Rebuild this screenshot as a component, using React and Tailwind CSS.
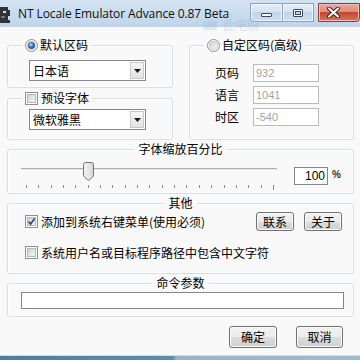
import React from 'react';

const btn =
  'flex items-center justify-center rounded-[3px] border border-[#707070] bg-[linear-gradient(#f2f2f2_0%,#ebebeb_50%,#dddddd_50%,#cfcfcf_100%)] shadow-[inset_0_0_0_1px_#fcfcfc] text-[12px] leading-none text-black';

const group = 'border border-[#d5dfe5] rounded-[3px] shadow-[inset_0_0_0_1px_#ffffff] m-0 p-0 min-w-0';

const Check = ({ checked }) => (
  <span className="flex w-[13px] h-[13px] shrink-0 border border-[#8e8f8f] bg-white p-[1px]">
    <span className="relative flex flex-1 border border-[#b3b8bd] bg-[linear-gradient(135deg,#cfd2d6,#f7f7f7)]">
      {checked && (
        <svg width="9" height="9" viewBox="0 0 9 9" className="absolute left-[-1px] top-[-1px]">
          <path d="M1.5 4.5 L3.6 7 L7.6 1.5" fill="none" stroke="#2c4c8c" strokeWidth="1.7" />
        </svg>
      )}
    </span>
  </span>
);

const Radio = ({ checked }) => (
  <svg width="13" height="13" viewBox="0 0 13 13" className="shrink-0">
    <defs>
      <linearGradient id="rg" x1="0" y1="0" x2="1" y2="1">
        <stop offset="0" stopColor="#c9ccd1" />
        <stop offset="1" stopColor="#f9f9f9" />
      </linearGradient>
      <radialGradient id="rd" cx="0.4" cy="0.35" r="0.7">
        <stop offset="0" stopColor="#b9e6ff" />
        <stop offset="0.5" stopColor="#3a8ae0" />
        <stop offset="1" stopColor="#123f8a" />
      </radialGradient>
    </defs>
    <circle cx="6.5" cy="6.5" r="6" fill="#ffffff" stroke="#8e8f8f" />
    <circle cx="6.5" cy="6.5" r="4.3" fill="url(#rg)" stroke="#b3b8bd" strokeWidth="0.6" />
    {checked && <circle cx="6.5" cy="6.5" r="3.2" fill="url(#rd)" stroke="#1d3f7a" strokeWidth="0.5" />}
  </svg>
);

const Select = ({ value }) => (
  <div className="flex items-center w-[117px] h-[21px] border border-[#828790] bg-white">
    <span className="flex-1 pl-[3px] text-[12px] leading-none">{value}</span>
    <span className="flex items-center justify-center w-[14px] h-[17px] mr-[1px] border border-[#c9c9c9] bg-[linear-gradient(#f7f7f7,#e3e3e3)]">
      <svg width="7" height="4" viewBox="0 0 7 4">
        <path d="M0 0 H7 L3.5 4 Z" fill="#1a1a1a" />
      </svg>
    </span>
  </div>
);

const Field = ({ label, value }) => (
  <div className="flex items-center h-[22px]">
    <span className="ml-[25px] w-[38px] text-[12px] leading-none">{label}</span>
    <span className="flex items-center w-[66px] h-[18px] border border-[#b9b9b9] bg-white pl-[2px] font-['Liberation_Sans',sans-serif] text-[11px] leading-none text-[#a3a3a3]">
      {value}
    </span>
  </div>
);

const ticks = Array.from({ length: 21 }, (_, i) => i);

export default function App() {
  return (
    <div className="relative w-[360px] h-[360px] overflow-hidden flex flex-col font-['Noto_Sans_CJK_SC','Noto_Sans',sans-serif] text-black">
      {/* Title bar */}
      <div className="flex items-start h-[27px] shrink-0 bg-[linear-gradient(180deg,#d3e3f3,#c0d4e9)]">
        <svg width="11" height="16" viewBox="0 0 11 16" className="mt-[7px]">
          <path d="M0 0 H8 V3 H10 V9 H8 V13 H10 V16 H0 Z" fill="#2e3338" />
          <rect x="3" y="4" width="3" height="2" fill="#d8dde2" />
          <rect x="1" y="9" width="4" height="2" fill="#6f7880" />
        </svg>
        <span className="ml-[7px] mt-[6px] font-['Open_Sans',sans-serif] text-[12px] leading-[16px] text-[#111] tracking-[-0.1px]">
          NT Locale Emulator Advance 0.87 Beta
        </span>
        <div className="ml-auto flex mt-[3px]">
          <div className="flex items-center justify-center w-[33px] h-[19px] border border-[#8ea4bd] rounded-bl-[4px] bg-[linear-gradient(#e6eef7_0%,#d5e2f0_50%,#c3d5e8_50%,#cfdfef_100%)] shadow-[inset_0_0_0_1px_#eef4fa]">
            <span className="mt-[5px] w-[11px] h-[4px] rounded-[1px] border border-[#3b4a5c] bg-white" />
          </div>
          <div className="flex items-center justify-center w-[31px] h-[19px] border border-l-0 border-[#8ea4bd] bg-[linear-gradient(#e6eef7_0%,#d5e2f0_50%,#c3d5e8_50%,#cfdfef_100%)] shadow-[inset_0_0_0_1px_#eef4fa]">
            <span className="flex w-[10px] h-[8px] rounded-[1px] border border-[#3b4a5c] bg-white p-[1px]">
              <span className="flex-1 border border-[#3b4a5c] bg-[#c9d6e4]" />
            </span>
          </div>
          <div className="ml-[4px] flex items-center justify-center w-[42px] h-[19px] border border-[#8b3a2c] rounded-br-[4px] bg-[linear-gradient(#e9a99b_0%,#dc8a76_50%,#c7472d_50%,#d7745a_100%)] shadow-[inset_0_0_0_1px_#f2c4b8]">
            <svg width="13" height="11" viewBox="0 0 13 11" className="-ml-[12px]">
              <path d="M2 1.5 L11 9.5 M11 1.5 L2 9.5" stroke="#3d2520" strokeWidth="4" strokeLinecap="round" />
              <path d="M2 1.5 L11 9.5 M11 1.5 L2 9.5" stroke="#ffffff" strokeWidth="2" strokeLinecap="round" />
            </svg>
          </div>
        </div>
      </div>

      {/* faint item seen through the glass */}
      <div className="absolute left-[203px] top-[19px] flex items-center gap-[6px] opacity-25">
        <span className="w-[14px] h-[9px] bg-[#8fb6e0]" />
        <span className="text-[12px] leading-none text-[#7d9cbc]">此电脑</span>
      </div>

      {/* Content */}
      <div className="flex-1 flex flex-col bg-[#f9f9f9] pl-[7px] pr-[6px] pt-[10px]">
        <div className="flex">
          <div className="flex flex-col w-[166px]">
            <fieldset className={`${group} h-[51px]`}>
              <legend className="ml-[14px] px-[3px] h-[16px] flex items-center gap-[2px] text-[12px] leading-[16px]">
                <Radio checked />
                <span>默认区码</span>
              </legend>
              <div className="ml-[21px] mt-[7px]">
                <Select value="日本语" />
              </div>
            </fieldset>
            <fieldset className={`${group} h-[50px] mt-[2px]`}>
              <legend className="ml-[14px] px-[3px] h-[16px] flex items-center gap-[3px] text-[12px] leading-[16px]">
                <Check />
                <span>预设字体</span>
              </legend>
              <div className="ml-[21px] mt-[3px]">
                <Select value="微软雅黑" />
              </div>
            </fieldset>
          </div>
          <fieldset className={`${group} ml-[16px] flex-1 h-[103px]`}>
            <legend className="ml-[14px] px-[3px] h-[16px] flex items-center gap-[2px] text-[12px] leading-[16px]">
              <Radio />
              <span>自定区码(高级)</span>
            </legend>
            <div className="mt-[9px] flex flex-col">
              <Field label="页码" value="932" />
              <Field label="语言" value="1041" />
              <Field label="时区" value="-540" />
            </div>
          </fieldset>
        </div>

        <fieldset className={`${group} h-[53px] mt-[1px]`}>
          <legend className="mx-auto px-[4px] text-[12px] leading-[16px]">字体缩放百分比</legend>
          <div className="flex items-start mt-[3px]">
            <div className="relative ml-[13px] w-[256px] h-[30px]">
              <div className="mt-[8px] h-[2px] border-t border-[#b0b0b0] border-b border-b-[#e8e8e8]" />
              <svg width="11" height="19" viewBox="0 0 11 19" className="absolute left-[62px] top-[2px]">
                <defs>
                  <linearGradient id="th" x1="0" y1="0" x2="1" y2="0">
                    <stop offset="0" stopColor="#f6f6f6" />
                    <stop offset="1" stopColor="#d6d6d6" />
                  </linearGradient>
                </defs>
                <path d="M0.5 2.5 Q0.5 0.5 2.5 0.5 H8.5 Q10.5 0.5 10.5 2.5 V13 Q10.5 14 9.7 14.8 L6.3 18 Q5.5 18.6 4.7 18 L1.3 14.8 Q0.5 14 0.5 13 Z" fill="url(#th)" stroke="#707070" />
              </svg>
              <div className="absolute left-[5px] top-[25px] w-[248px] flex justify-between items-start">
                {ticks.map((i) => (
                  <span key={i} className={`w-px bg-[#8c8c8c] ${i === 20 ? 'h-[5px]' : 'h-[3px]'}`} />
                ))}
              </div>
            </div>
            <span className="ml-[17px] mt-[7px] flex items-center justify-end w-[34px] h-[18px] border border-[#828790] bg-white pr-[2px] font-['Liberation_Sans',sans-serif] text-[12px] leading-none">
              100
            </span>
            <span className="ml-[4px] mt-[10px] font-['Liberation_Sans',sans-serif] text-[10px] leading-none font-bold text-[#333]">%</span>
          </div>
        </fieldset>

        <fieldset className={`${group} h-[79px] mt-[1px]`}>
          <legend className="mx-auto px-[4px] text-[12px] leading-[16px]">其他</legend>
          <div className="flex items-center h-[21px]">
            <span className="ml-[17px]">
              <Check checked />
            </span>
            <span className="ml-[3px] text-[12px] leading-none">添加到系统右键菜单(使用必须)</span>
            <button className={`${btn} ml-auto w-[38px] h-[19px]`}>联系</button>
            <button className={`${btn} ml-[10px] mr-[11px] w-[38px] h-[19px]`}>关于</button>
          </div>
          <div className="flex items-center h-[21px] mt-[10px]">
            <span className="ml-[17px]">
              <Check />
            </span>
            <span className="ml-[3px] text-[12px] leading-none">系统用户名或目标程序路径中包含中文字符</span>
          </div>
        </fieldset>

        <fieldset className={`${group} h-[42px] mt-[1px]`}>
          <legend className="mx-auto px-[4px] text-[12px] leading-[16px]">命令参数</legend>
          <div className="ml-[13px] mr-[9px] mt-[1px] h-[17px] border border-[#828790] bg-white" />
        </fieldset>

        <div className="flex justify-end mt-[9px] pr-[11px] gap-[19px]">
          <button className={`${btn} w-[48px] h-[22px]`}>确定</button>
          <button className={`${btn} w-[47px] h-[22px]`}>取消</button>
        </div>
      </div>

      {/* Bottom frame */}
      <div className="h-[5px] shrink-0 border-t border-[#d3dde6] bg-[linear-gradient(90deg,#4d7f9c_0%,#5d8ead_48%,#98b6c8_49%,#9ebbcc_100%)]" />
    </div>
  );
}
